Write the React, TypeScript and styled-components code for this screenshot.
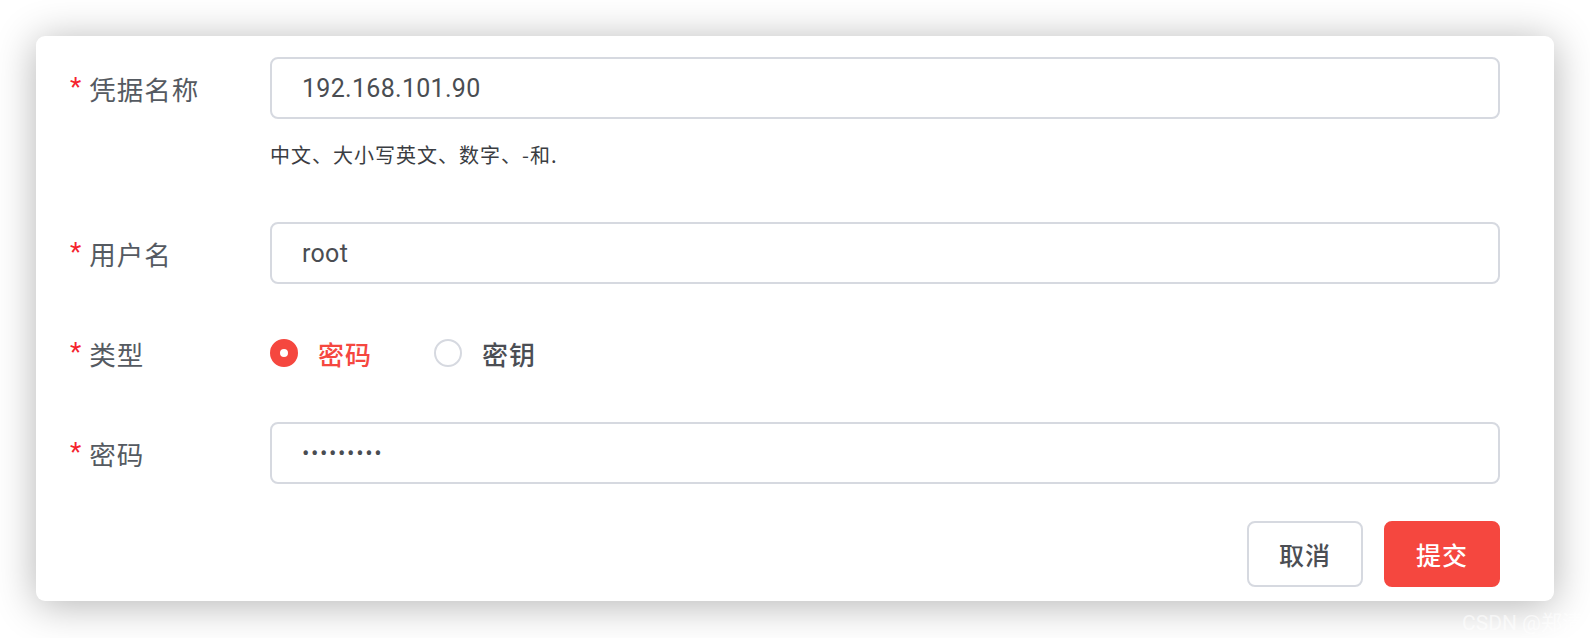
import * as React from 'react';
import styled, { createGlobalStyle } from 'styled-components';

const GlobalStyle = createGlobalStyle`
	html, body {
		margin: 0;
		padding: 0;
		background: #ffffff;
	}
	body {
		font-family: "Roboto", "Noto Sans CJK SC", sans-serif;
	}
`;

const red = '#f5473f';
const borderGrey = '#d6d9e0';

const Page = styled.div`
	position: relative;
	width: 1590px;
	height: 638px;
	padding: 36px 0 0 36px;
	box-sizing: border-box;
	overflow: hidden;
`;

const Card = styled.form`
	width: 1518px;
	box-sizing: border-box;
	padding: 21px 54px 14px 34px;
	background: #ffffff;
	border-radius: 9px;
	box-shadow: 0 4px 40px rgba(0, 0, 0, 0.3);
`;

const FormItem = styled.div<{ $gap?: number }>`
	display: flex;
	align-items: flex-start;
	margin-bottom: ${(p) => (p.$gap === undefined ? 38 : p.$gap)}px;
`;

const Label = styled.label`
	display: flex;
	align-items: center;
	flex: 0 0 200px;
	height: 62px;
	font-family: "Noto Sans CJK SC", sans-serif;
	font-size: 26.5px;
	letter-spacing: 1px;
	color: #555a61;
`;

const Star = styled.span`
	font-family: "Roboto", sans-serif;
	font-size: 26px;
	color: #f5222d;
	margin-right: 7px;
	position: relative;
	top: -1px;
`;

const Control = styled.div`
	flex: 1;
	min-width: 0;
`;

const TextInput = styled.input`
	display: block;
	width: 100%;
	height: 62px;
	box-sizing: border-box;
	padding: 0 30px;
	border: 2px solid ${borderGrey};
	border-radius: 8px;
	outline: none;
	font-family: "Roboto", "Noto Sans CJK SC", sans-serif;
	font-size: 25px;
	letter-spacing: 0.3px;
	color: #4a4d52;
	background: #ffffff;
`;

const PasswordInput = styled(TextInput)`
	font-size: 22px;
	letter-spacing: 1.6px;
`;

const Hint = styled.div`
	padding: 22px 0 15px;
	line-height: 28px;
	font-family: "Noto Sans CJK SC", sans-serif;
	font-size: 20px;
	letter-spacing: 1px;
	color: #3a3d42;
`;

const RadioGroup = styled.div`
	display: flex;
	align-items: center;
	height: 62px;
	gap: 62px;
`;

const RadioOption = styled.label`
	display: flex;
	align-items: center;
	gap: 20px;
	cursor: pointer;
`;

const RadioDot = styled.span<{ $checked: boolean }>`
	width: 28px;
	height: 28px;
	box-sizing: border-box;
	border-radius: 50%;
	background: #ffffff;
	border: ${(p) => (p.$checked ? `10px solid ${red}` : `2px solid ${borderGrey}`)};
`;

const RadioText = styled.span<{ $checked: boolean }>`
	font-family: "Noto Sans CJK SC", sans-serif;
	font-size: 26px;
	font-weight: 500;
	letter-spacing: 1px;
	color: ${(p) => (p.$checked ? red : '#4b4e54')};
`;

const Footer = styled.div`
	display: flex;
	justify-content: flex-end;
	gap: 21px;
`;

const Button = styled.button<{ $primary?: boolean }>`
	width: 116px;
	height: 66px;
	box-sizing: border-box;
	border-radius: 8px;
	border: 2px solid ${(p) => (p.$primary ? red : borderGrey)};
	background: ${(p) => (p.$primary ? red : '#ffffff')};
	color: ${(p) => (p.$primary ? '#ffffff' : '#4b4e54')};
	font-family: "Noto Sans CJK SC", sans-serif;
	font-size: 25px;
	font-weight: 500;
	letter-spacing: 1px;
	cursor: pointer;
`;

const Watermark = styled.div`
	position: absolute;
	left: 1462px;
	top: 606px;
	white-space: nowrap;
	font-family: "Roboto", "Noto Sans CJK SC", sans-serif;
	font-size: 21px;
	color: rgba(255, 255, 255, 0.6);
`;

export default function App() {
	const [type, setType] = React.useState<'password' | 'key'>('password');

	return (
		<>
			<GlobalStyle />
			<Page>
				<Card onSubmit={(e) => e.preventDefault()}>
					<FormItem>
						<Label>
							<Star>*</Star>
							凭据名称
						</Label>
						<Control>
							<TextInput defaultValue="192.168.101.90" />
							<Hint>中文、大小写英文、数字、-和.</Hint>
						</Control>
					</FormItem>
					<FormItem>
						<Label>
							<Star>*</Star>
							用户名
						</Label>
						<Control>
							<TextInput defaultValue="root" />
						</Control>
					</FormItem>
					<FormItem>
						<Label>
							<Star>*</Star>
							类型
						</Label>
						<Control>
							<RadioGroup>
								<RadioOption onClick={() => setType('password')}>
									<RadioDot $checked={type === 'password'} />
									<RadioText $checked={type === 'password'}>密码</RadioText>
								</RadioOption>
								<RadioOption onClick={() => setType('key')}>
									<RadioDot $checked={type === 'key'} />
									<RadioText $checked={type === 'key'}>密钥</RadioText>
								</RadioOption>
							</RadioGroup>
						</Control>
					</FormItem>
					<FormItem $gap={37}>
						<Label>
							<Star>*</Star>
							密码
						</Label>
						<Control>
							<PasswordInput type="password" defaultValue="123456789" />
						</Control>
					</FormItem>
					<Footer>
						<Button type="button">取消</Button>
						<Button type="submit" $primary>
							提交
						</Button>
					</Footer>
				</Card>
				<Watermark>CSDN @郑清</Watermark>
			</Page>
		</>
	);
}
